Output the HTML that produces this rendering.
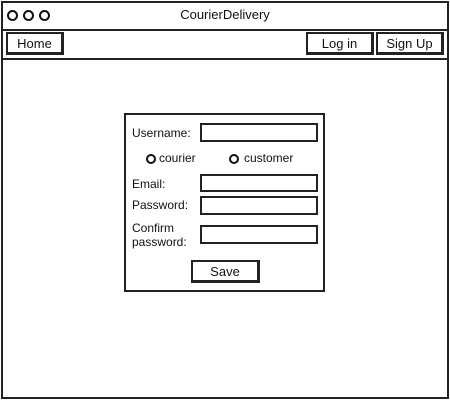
<!DOCTYPE html>
<html><head><style>
body{margin:0;width:450px;height:401px;background:#fff;position:relative;overflow:hidden;font-family:"Liberation Sans",sans-serif;font-size:12px;color:#111}
.a{position:absolute;box-sizing:border-box}
.b{border:2px solid #222;background:#fff}
.t{position:absolute;white-space:nowrap}
.btn{border:2px solid #222;border-right-width:3px;border-bottom-width:3px;text-align:center;font-size:13px}
.c{width:10px;height:10px;border:2px solid #111;border-radius:50%}
</style></head><body>
<div class="a" style="left:1px;top:1px;width:448px;height:398px;border:2px solid #222;background:#fff"></div>
<div class="a" style="left:1px;top:1px;width:448px;height:30px;border:2px solid #222;background:#fff"></div>
<div class="a" style="left:1px;top:29px;width:448px;height:31px;border:2px solid #222;background:#fff"></div>
<div class="a c" style="left:7px;top:10px;width:11px;height:11px"></div>
<div class="a c" style="left:23px;top:10px;width:11px;height:11px"></div>
<div class="a c" style="left:39px;top:10px;width:11px;height:11px"></div>
<div class="t" style="left:0;width:450px;text-align:center;top:7px;font-size:13px">CourierDelivery</div>
<div class="a btn" style="left:6px;top:32px;width:58px;height:23px;line-height:19px">Home</div>
<div class="a btn" style="left:306px;top:32px;width:68px;height:23px;line-height:19px">Log in</div>
<div class="a btn" style="left:376px;top:32px;width:68px;height:23px;line-height:19px">Sign Up</div>
<div class="a b" style="left:124px;top:113px;width:201px;height:179px"></div>
<div class="t" style="left:132px;top:126px">Username:</div>
<div class="a b" style="left:200px;top:123px;width:118px;height:19px"></div>
<div class="a c" style="left:146px;top:154px"></div>
<div class="t" style="left:159px;top:151px">courier</div>
<div class="a c" style="left:229px;top:154px"></div>
<div class="t" style="left:244px;top:151px">customer</div>
<div class="t" style="left:132px;top:177px">Email:</div>
<div class="a b" style="left:200px;top:174px;width:118px;height:18px"></div>
<div class="t" style="left:132px;top:198px">Password:</div>
<div class="a b" style="left:200px;top:196px;width:118px;height:19px"></div>
<div class="t" style="left:132px;top:221px;line-height:14px">Confirm<br>password:</div>
<div class="a b" style="left:200px;top:225px;width:118px;height:19px"></div>
<div class="a btn" style="left:191px;top:260px;width:69px;height:23px;line-height:19px">Save</div>
</body></html>
